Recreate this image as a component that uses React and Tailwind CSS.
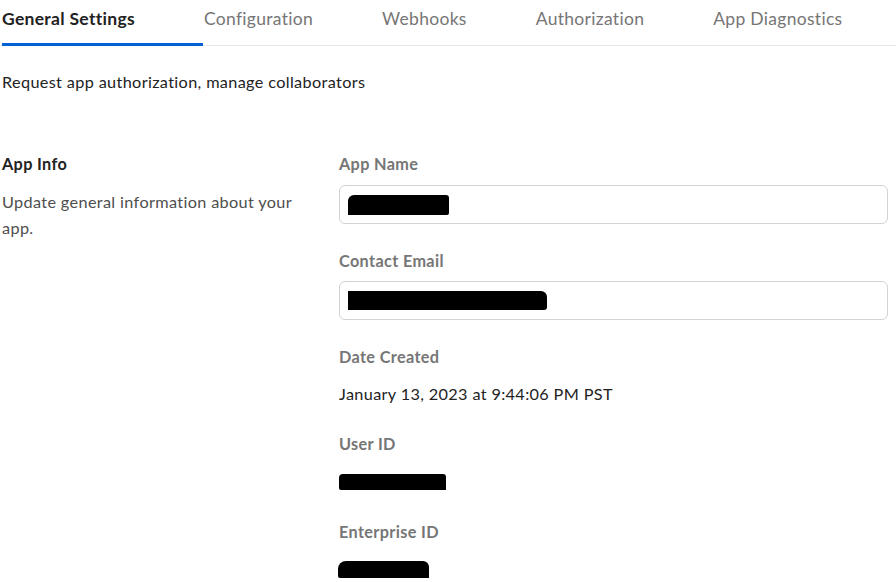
import React from "react";

const tabs = ["General Settings", "Configuration", "Webhooks", "Authorization", "App Diagnostics"];

function Redaction({ className }) {
  // black marker scribble used to hide values
  return <div className={"bg-black " + className} />;
}

function Label({ children, className = "" }) {
  return <div className={"text-[16.25px] leading-5 font-bold tracking-[0.35px] text-[#767676] " + className}>{children}</div>;
}

function TextInput({ children }) {
  return (
    <div className="h-[39px] w-[549px] rounded-[6px] border border-[#d3d3d3] bg-white flex items-center px-[8px]">
      {children}
    </div>
  );
}

export default function App() {
  return (
    <div className="w-[896px] h-[582px] overflow-hidden bg-white text-[#222]" style={{ fontFamily: "Lato, 'Noto Sans', sans-serif" }}>
      <div className="flex border-b border-[#e8e8e8] h-[46px]">
        {tabs.map((t, i) => (
          <div key={t} className={"relative shrink-0 whitespace-nowrap flex items-start pt-[7px] text-[17.5px] tracking-[0.3px] leading-6 " + (i === 0 ? "pl-[2px] pr-[68px] font-bold text-[#222]" : "pl-[1px] pr-[68px] text-[#767676]")}>
            {t}
            {i === 0 && <div className="absolute left-[2px] right-0 bottom-[-1px] h-[3px] bg-[#0061d5]" />}
          </div>
        ))}
      </div>

      <p className="pl-[2px] mt-[26px] text-[16.25px] tracking-[0.35px] leading-5">Request app authorization, manage collaborators</p>

      <div className="flex mt-[62px] pl-[2px]">
        <div className="w-[337px] shrink-0">
          <div className="text-[16.25px] tracking-[0.35px] leading-5 font-bold">App Info</div>
          <p className="mt-[15px] w-[300px] text-[16.25px] tracking-[0.35px] leading-[26px] text-[#4e4e4e]">
            Update general information about your app.
          </p>
        </div>

        <div className="flex flex-col">
          <Label>App Name</Label>
          <div className="mt-[11px]">
            <TextInput>
              <Redaction className="w-[101px] h-[20px] rounded-tl-[6px] rounded-tr-[3px] rounded-br-[2px]" />
            </TextInput>
          </div>

          <Label className="mt-[27px]">Contact Email</Label>
          <div className="mt-[10px]">
            <TextInput>
              <Redaction className="w-[199px] h-[19px] rounded-tr-[6px] rounded-br-[3px]" />
            </TextInput>
          </div>

          <Label className="mt-[27px]">Date Created</Label>
          <div className="mt-[17px] text-[16.25px] tracking-[0.35px] leading-5 text-[#222]">January 13, 2023 at 9:44:06 PM PST</div>

          <Label className="mt-[30px]">User ID</Label>
          <Redaction className="mt-[20px] w-[107px] h-[16px] rounded-tl-[4px] rounded-tr-[3px] rounded-bl-[2px]" />

          <Label className="mt-[32px]">Enterprise ID</Label>
          <Redaction className="mt-[19px] -ml-[1px] w-[91px] h-[17px] rounded-tl-[8px] rounded-tr-[6px] rounded-bl-[2px]" />
        </div>
      </div>
    </div>
  );
}
